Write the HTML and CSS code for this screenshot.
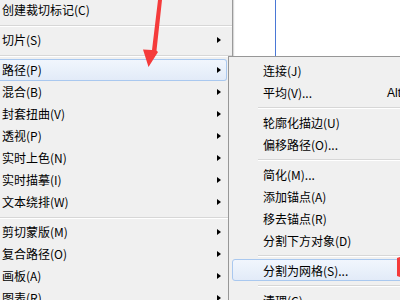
FILE: index.html
```html
<!DOCTYPE html>
<html lang="zh-CN">
<head>
  <meta charset="UTF-8">
  <meta name="viewport" content="width=device-width, initial-scale=1.0">
  <title>对象菜单 - 路径</title>
  <link rel="stylesheet" href="styles.css">
</head>
<body>
<div class="screen">
  <div class="menu main-menu">
    <div class="item">创建裁切标记(C)</div>
    <div class="sep"></div>
    <div class="item has-sub">切片(S)</div>
    <div class="sep"></div>
    <div class="item has-sub active">路径(P)</div>
    <div class="item has-sub">混合(B)</div>
    <div class="item has-sub">封套扭曲(V)</div>
    <div class="item has-sub">透视(P)</div>
    <div class="item has-sub">实时上色(N)</div>
    <div class="item has-sub">实时描摹(I)</div>
    <div class="item has-sub">文本绕排(W)</div>
    <div class="sep"></div>
    <div class="item has-sub">剪切蒙版(M)</div>
    <div class="item has-sub">复合路径(O)</div>
    <div class="item has-sub">画板(A)</div>
    <div class="item has-sub">图表(R)</div>
  </div>

  <div class="side">
    <div class="canvas">
      <div class="guide"></div>
    </div>
    <div class="menu sub-menu">
      <div class="item"><span>连接(J)</span></div>
      <div class="item"><span>平均(V)...</span><span class="key">Alt+Ctrl+J</span></div>
      <div class="sep"></div>
      <div class="item"><span>轮廓化描边(U)</span></div>
      <div class="item"><span>偏移路径(O)...</span></div>
      <div class="sep"></div>
      <div class="item"><span>简化(M)...</span></div>
      <div class="item"><span>添加锚点(A)</span></div>
      <div class="item"><span>移去锚点(R)</span></div>
      <div class="item"><span>分割下方对象(D)</span></div>
      <div class="sep"></div>
      <div class="item active"><span>分割为网格(S)...</span></div>
      <div class="sep"></div>
      <div class="item"><span>清理(C)</span></div>
    </div>
  </div>

  <!-- red annotation arrows drawn over the screenshot -->
  <svg class="marks" width="400" height="300" viewBox="0 0 400 300">
    <polygon points="158,0 162,0 156.5,50.5 158,52 148.5,67 143,49.5 152,50" fill="#f53b3b"/>
    <polygon points="397,258 400,257 400,277 397,276" fill="#f53b3b"/>
  </svg>
</div>
</body>
</html>
```

FILE: styles.css
```css
body {
  margin: 0;
  background: #fff;
  font-family: "Noto Sans CJK SC", "Liberation Sans", sans-serif;
  font-size: 12px;
  color: #000;
}
.screen {
  position: relative;
  display: flex;
  align-items: flex-start;
  width: 400px;
  height: 300px;
  overflow: hidden;
}
.menu {
  background: #f0f0f0;
}
.main-menu {
  position: relative;
  z-index: 1;
  flex: none;
  width: 232px;
  margin-top: -1px;
  border-right: 1px solid #9a9a9a;
  box-shadow: 1px 0 1px rgba(0,0,0,0.15);
}
.item {
  height: 22px;
  line-height: 22px;
  box-sizing: border-box;
  white-space: nowrap;
}
.main-menu .item {
  display: flex;
  align-items: center;
  justify-content: space-between;
  margin-left: -3px;
  margin-right: 5px;
  padding: 0 5px 0 5px;
  border: 1px solid transparent;
  border-left: 0;
}
.main-menu .has-sub::after {
  content: "";
  border-left: 4px solid #000;
  border-top: 3.5px solid transparent;
  border-bottom: 3.5px solid transparent;
}
.item.active {
  background: linear-gradient(#f1f6fd, #e2ebf8);
  border: 1px solid #a9c8ef;
  border-radius: 3px;
}
.main-menu .item.active {
  border-left: 0;
}
.sep {
  height: 1px;
  margin: 4px 0 2px;
  background: #d7d7d7;
  border-bottom: 1px solid #fff;
}
.side {
  flex: none;
  width: 260px;
  margin-left: -5px;
}
.canvas {
  height: 56px;
  background: #fff;
}
.guide {
  height: 56px;
  margin-left: 47px;
  border-left: 1px solid #4a78d6;
}
.sub-menu {
  position: relative;
  z-index: 2;
  border: 1px solid #979797;
  padding: 2px 3px;
  height: 260px;
}
.sub-menu .item {
  display: grid;
  grid-template-columns: 124px auto;
  padding-left: 30px;
  border: 1px solid transparent;
}
.sub-menu .item.active {
  border-color: #a9c8ef;
}
.sub-menu .sep {
  margin-left: 26px;
  margin-right: -3px;
}
.key {
  font-family: "Liberation Sans", Arial, sans-serif;
}
.marks {
  position: absolute;
  left: 0;
  top: 0;
  z-index: 3;
  pointer-events: none;
}
```
